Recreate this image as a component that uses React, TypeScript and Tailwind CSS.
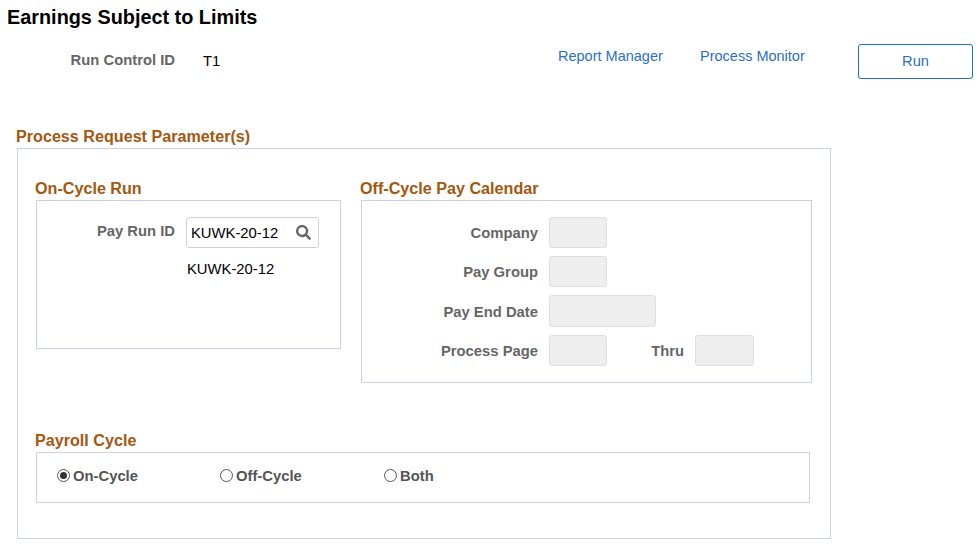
import React from 'react';
import { FaSearch } from 'react-icons/fa';

const headingClass = "text-[16.15px] leading-[19px] font-bold text-[#a5570f]";
const labelClass = "text-[14.8px] leading-[18px] font-bold text-[#666666] text-right";
const valueClass = "text-[14.8px] leading-[18px]";
const linkClass = "mt-[3px] text-[14.5px] leading-[18px] text-[#2a70c8]";

const GrayBox = ({ className }: { className: string }) => (
  <div className={`h-[31px] bg-[#eeeeee] border border-[#dedede] rounded-[3px] ${className}`} />
);

const Radio = ({ checked, label, className }: { checked?: boolean; label: string; className: string }) => (
  <div className={`flex items-center ${className}`}>
    <span className="w-[13px] h-[13px] rounded-full border border-[#555555] bg-white flex items-center justify-center">
      {checked && <span className="w-[7px] h-[7px] rounded-full bg-[#333333]" />}
    </span>
    <span className="ml-[3px] mt-[1px] text-[14.8px] leading-[18px] font-bold text-[#555555]">{label}</span>
  </div>
);

const App: React.FC = () => {
  return (
    <div className="w-[980px] h-[545px] overflow-hidden bg-white text-black" style={{ fontFamily: '"Liberation Sans", Arial, sans-serif' }}>
      <h1 className="pl-[7px] pt-[6px] text-[19.85px] leading-[22px] font-bold">Earnings Subject to Limits</h1>

      <div className="flex items-start mt-[16px] h-[35px]">
        <div className={`${labelClass} w-[175px] mt-[7px]`}>Run Control ID</div>
        <div className={`${valueClass} ml-[28px] mt-[8px] w-[355px]`}>T1</div>
        <a className={`${linkClass} w-[142px]`}>Report Manager</a>
        <a className={`${linkClass} w-[158px]`}>Process Monitor</a>
        <button className="w-[115px] h-[35px] rounded-[3px] border border-[#1f6fd0] pb-[2px] text-[14.67px] text-[#2a70c8]">Run</button>
      </div>

      <div className="ml-[16px] mt-[48px]">
        <h2 className={headingClass}>Process Request Parameter(s)</h2>
        <div className="ml-px mt-[2px] w-[814px] h-[391px] border border-[#cdd3da] pl-[17px]">
          <div className="flex items-start pt-[30px]">
            <div>
              <h3 className={headingClass}>On-Cycle Run</h3>
              <div className="ml-px mt-[2px] w-[305px] h-[149px] border border-[#cdd3da]">
                <div className="flex items-start pt-[16px]">
                  <div className={`${labelClass} w-[138px] mt-[5px]`}>Pay Run ID</div>
                  <div className="ml-[11px] w-[133px] h-[31px] border border-[#cfd3d8] rounded-[3px] flex items-center justify-between pl-[4px] pr-[7px]">
                    <span className={valueClass}>KUWK-20-12</span>
                    <FaSearch className="w-[15px] h-[15px] text-[#666666]" />
                  </div>
                </div>
                <div className={`${valueClass} ml-[150px] mt-[12px]`}>KUWK-20-12</div>
              </div>
            </div>
            <div className="ml-[19px]">
              <h3 className={headingClass}>Off-Cycle Pay Calendar</h3>
              <div className="ml-px mt-[2px] w-[451px] h-[183px] border border-[#cdd3da] pt-[16px]">
                <div className="flex items-center">
                  <div className={`${labelClass} w-[176px]`}>Company</div>
                  <GrayBox className="ml-[11px] w-[58px]" />
                </div>
                <div className="flex items-center mt-[8px]">
                  <div className={`${labelClass} w-[176px]`}>Pay Group</div>
                  <GrayBox className="ml-[11px] w-[58px]" />
                </div>
                <div className="flex items-center mt-[8px]">
                  <div className={`${labelClass} w-[176px] mt-[1px]`}>Pay End Date</div>
                  <GrayBox className="ml-[11px] w-[107px] h-[32px]" />
                </div>
                <div className="flex items-center mt-[8px]">
                  <div className={`${labelClass} w-[176px]`}>Process Page</div>
                  <GrayBox className="ml-[11px] w-[58px]" />
                  <div className={`${labelClass} ml-[44px] w-[33px]`}>Thru</div>
                  <GrayBox className="ml-[11px] w-[59px]" />
                </div>
              </div>
            </div>
          </div>

          <h3 className={`${headingClass} mt-[48px]`}>Payroll Cycle</h3>
          <div className="ml-px mt-[2px] w-[774px] h-[51px] border border-[#cdd3da] flex items-start pt-[13px]">
            <Radio checked label="On-Cycle" className="ml-[20px] w-[163px]" />
            <Radio label="Off-Cycle" className="w-[164px]" />
            <Radio label="Both" className="" />
          </div>
        </div>
      </div>
    </div>
  );
};

export default App;
